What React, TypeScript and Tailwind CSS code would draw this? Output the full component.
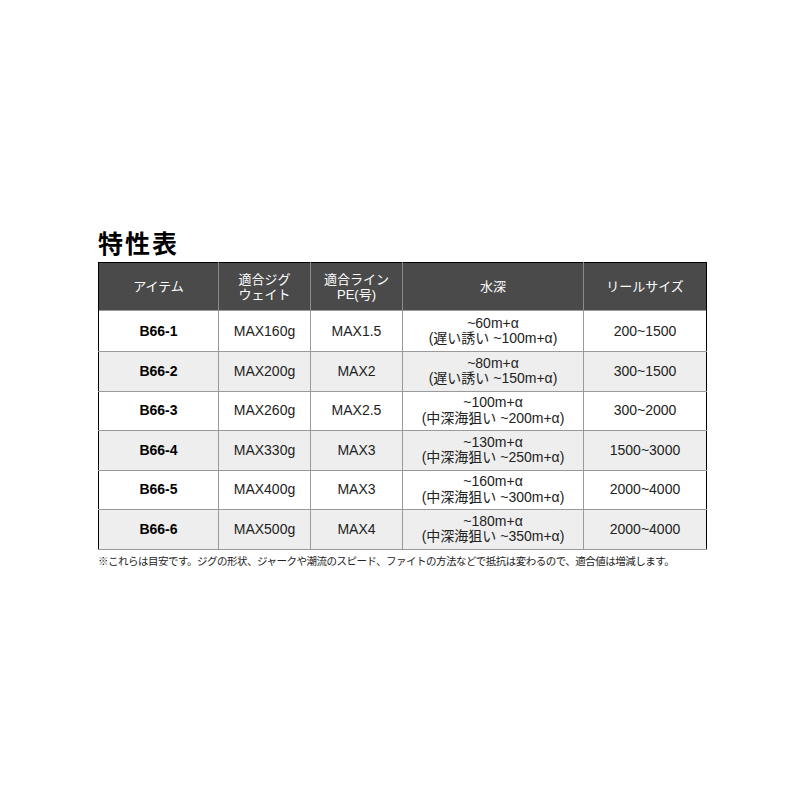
const rows = [
  { item: "B66-1", jig: "MAX160g", line: "MAX1.5", depth: ["~60m+α", "(遅い誘い ~100m+α)"], reel: "200~1500" },
  { item: "B66-2", jig: "MAX200g", line: "MAX2", depth: ["~80m+α", "(遅い誘い ~150m+α)"], reel: "300~1500" },
  { item: "B66-3", jig: "MAX260g", line: "MAX2.5", depth: ["~100m+α", "(中深海狙い ~200m+α)"], reel: "300~2000" },
  { item: "B66-4", jig: "MAX330g", line: "MAX3", depth: ["~130m+α", "(中深海狙い ~250m+α)"], reel: "1500~3000" },
  { item: "B66-5", jig: "MAX400g", line: "MAX3", depth: ["~160m+α", "(中深海狙い ~300m+α)"], reel: "2000~4000" },
  { item: "B66-6", jig: "MAX500g", line: "MAX4", depth: ["~180m+α", "(中深海狙い ~350m+α)"], reel: "2000~4000" },
];

const font = { fontFamily: '"Liberation Sans", "Noto Sans CJK JP", sans-serif' };

export default function App() {
  return (
    <div className="w-[800px] h-[800px] bg-white text-[#222]" style={font}>
      <div className="pt-[229px] pl-[98px]">
        <h2 className="text-[25px] font-bold leading-[30px] text-black tracking-[2px]">特性表</h2>
        <table className="mt-[3px] w-[608px] border-collapse border-[1.5px] border-black table-fixed">
          <colgroup>
            <col className="w-[120px]" />
            <col className="w-[92px]" />
            <col className="w-[92px]" />
            <col className="w-[181px]" />
            <col className="w-[123px]" />
          </colgroup>
          <thead>
            <tr className="h-[48px] bg-[#4a4a4a] text-white text-[13px] leading-[15px]">
              <th className="font-normal border-r border-[#8a8a8a]">アイテム</th>
              <th className="font-normal border-r border-[#8a8a8a]">
                適合ジグ<br />ウェイト
              </th>
              <th className="font-normal border-r border-[#8a8a8a]">
                適合ライン<br />PE(号)
              </th>
              <th className="font-normal border-r border-[#8a8a8a]">水深</th>
              <th className="font-normal">リールサイズ</th>
            </tr>
          </thead>
          <tbody>
            {rows.map((r, i) => (
              <tr
                key={r.item}
                className={`${i === 0 ? "h-[41px]" : "h-[39.5px]"} ${i % 2 === 1 ? "bg-[#eeeeee]" : "bg-white"} text-[14px] text-center`}
              >
                <td className="border border-[#9a9a9a] border-l-black font-bold text-black">{r.item}</td>
                <td className="border border-[#9a9a9a]">{r.jig}</td>
                <td className="border border-[#9a9a9a]">{r.line}</td>
                <td className="border border-[#9a9a9a] leading-[15.5px]">
                  {r.depth[0]}
                  <br />
                  {r.depth[1]}
                </td>
                <td className="border border-[#9a9a9a] border-r-black">{r.reel}</td>
              </tr>
            ))}
          </tbody>
        </table>
        <p className="mt-[4px] text-[10.5px] leading-[14px] tracking-[-0.5px] text-[#222] whitespace-nowrap">
          ※これらは目安です。ジグの形状、ジャークや潮流のスピード、ファイトの方法などで抵抗は変わるので、適合値は増減します。
        </p>
      </div>
    </div>
  );
}
